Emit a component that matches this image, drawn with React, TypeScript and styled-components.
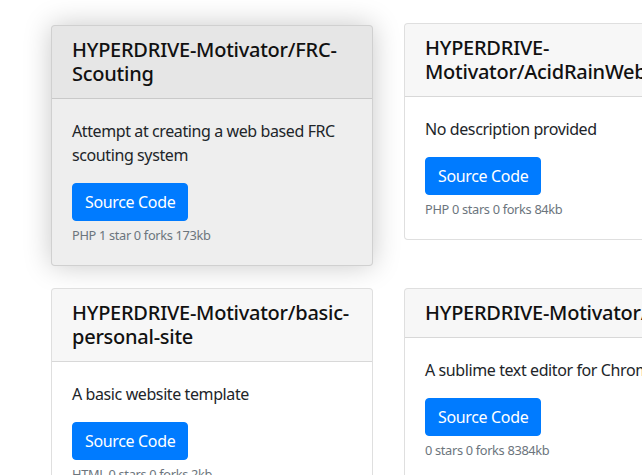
import React from "react";
import styled, { createGlobalStyle, css } from "styled-components";

const Global = createGlobalStyle`
  html, body { margin: 0; padding: 0; background: #fff; }
  body {
    font-family: "Segoe UI", "Noto Sans", "Liberation Sans", sans-serif;
    color: #212529;
    font-size: 16px;
    line-height: 1.5;
    letter-spacing: -0.4px;
    overflow: hidden;
  }
  * { box-sizing: border-box; }
`;

const Page = styled.div`
  padding: 23px 0 0 51px;
  width: 1000px;
`;

const Grid = styled.div`
  display: grid;
  grid-template-columns: 322px 322px;
  column-gap: 31px;
  align-items: start;
`;

const Card = styled.div<{ $active?: boolean }>`
  display: flex;
  flex-direction: column;
  border: 1px solid rgba(0, 0, 0, 0.125);
  border-radius: 4px;
  background: #fff;
  margin-bottom: 23px;
  ${(p) =>
    p.$active &&
    css`
      background: #eeeeee;
      margin-top: 2px;
      margin-bottom: 22px;
      box-shadow: 0 0 28px rgba(0, 0, 0, 0.22);
    `}
`;

const Header = styled.div`
  padding: 12px 20px;
  background: rgba(0, 0, 0, 0.03);
  border-bottom: 1px solid rgba(0, 0, 0, 0.125);
  border-radius: 3px 3px 0 0;
`;

const Title = styled.h5`
  margin: 0;
  font-size: 20px;
  font-weight: 500;
  line-height: 1.2;
  letter-spacing: -0.25px;
  color: #111;
  overflow-wrap: break-word;
`;

const Body = styled.div`
  padding: 20px;
`;

const Description = styled.p`
  margin: 0 0 16px;
`;

const Footer = styled.div``;

const Button = styled.a`
  display: inline-block;
  padding: 6px 12px;
  font-size: 16px;
  line-height: 1.5;
  letter-spacing: -0.35px;
  color: #fff;
  background: #007bff;
  border: 1px solid #007bff;
  border-radius: 4px;
  text-decoration: none;
  vertical-align: top;
`;

const Meta = styled.small`
  display: block;
  padding-top: 5px;
  font-size: 12.8px;
  line-height: 19px;
  letter-spacing: -0.33px;
  color: #6c757d;
`;

type Repo = {
  name: string;
  desc: string;
  meta: string;
  active?: boolean;
};

const repos: Repo[] = [
  {
    name: "HYPERDRIVE-Motivator/FRC-Scouting",
    desc: "Attempt at creating a web based FRC scouting system",
    meta: "PHP 1 star 0 forks 173kb",
    active: true,
  },
  {
    name: "HYPERDRIVE-Motivator/AcidRainWebsite",
    desc: "No description provided",
    meta: "PHP 0 stars 0 forks 84kb",
  },
  {
    name: "HYPERDRIVE-Motivator/basic-personal-site",
    desc: "A basic website template",
    meta: "HTML 0 stars 0 forks 2kb",
  },
  {
    name: "HYPERDRIVE-Motivator/Caret",
    desc: "A sublime text editor for Chrome OS",
    meta: "0 stars 0 forks 8384kb",
  },
];

export default function App() {
  return (
    <>
      <Global />
      <Page>
        <Grid>
          {repos.map((r) => (
            <Card key={r.name} $active={r.active}>
              <Header>
                <Title>{r.name}</Title>
              </Header>
              <Body>
                <Description>{r.desc}</Description>
                <Footer>
                  <Button href="#">Source Code</Button>
                  <Meta>{r.meta}</Meta>
                </Footer>
              </Body>
            </Card>
          ))}
        </Grid>
      </Page>
    </>
  );
}
